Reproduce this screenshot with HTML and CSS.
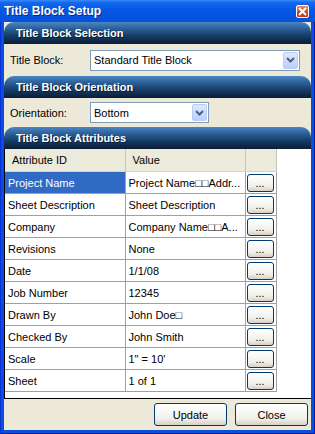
FILE: index.html
```html
<!DOCTYPE html>
<html lang="en">
<head>
    <meta charset="UTF-8">
    <title>Title Block Setup</title>
    <link rel="stylesheet" href="styles.css">
</head>
<body>
    <div class="window">
        <div class="titlebar">
            <span class="title">Title Block Setup</span>
            <span class="close-box">
                <svg width="9" height="9" viewBox="0 0 9 9"><path d="M1 1L8 8M8 1L1 8" stroke="#fff" stroke-width="2"/></svg>
            </span>
        </div>
        <div class="client">
            <div class="section-head">Title Block Selection</div>
            <div class="field-row first">
                <label>Title Block:</label>
                <div class="combo wide">
                    <span class="combo-text">Standard Title Block</span>
                    <span class="combo-btn"><svg width="9" height="6" viewBox="0 0 9 6"><path d="M1 1L4.5 4.5L8 1" fill="none" stroke="#4d6185" stroke-width="2"/></svg></span>
                </div>
            </div>
            <div class="section-head">Title Block Orientation</div>
            <div class="field-row second">
                <label>Orientation:</label>
                <div class="combo narrow">
                    <span class="combo-text">Bottom</span>
                    <span class="combo-btn"><svg width="9" height="6" viewBox="0 0 9 6"><path d="M1 1L4.5 4.5L8 1" fill="none" stroke="#4d6185" stroke-width="2"/></svg></span>
                </div>
            </div>
            <div class="section-head">Title Block Attributes</div>
            <div class="grid-wrap">
                <table class="grid">
                    <colgroup>
                        <col class="c-id">
                        <col class="c-val">
                        <col class="c-btn">
                    </colgroup>
                    <thead>
                        <tr><th>Attribute ID</th><th>Value</th><th></th></tr>
                    </thead>
                    <tbody>
                        <tr><td class="selected">Project Name</td><td>Project Name□□Addr...</td><td><button class="dots">...</button></td></tr>
                        <tr><td>Sheet Description</td><td>Sheet Description</td><td><button class="dots">...</button></td></tr>
                        <tr><td>Company</td><td>Company Name□□A...</td><td><button class="dots">...</button></td></tr>
                        <tr><td>Revisions</td><td>None</td><td><button class="dots">...</button></td></tr>
                        <tr><td>Date</td><td>1/1/08</td><td><button class="dots">...</button></td></tr>
                        <tr><td>Job Number</td><td>12345</td><td><button class="dots">...</button></td></tr>
                        <tr><td>Drawn By</td><td>John Doe□</td><td><button class="dots">...</button></td></tr>
                        <tr><td>Checked By</td><td>John Smith</td><td><button class="dots">...</button></td></tr>
                        <tr><td>Scale</td><td>1" = 10'</td><td><button class="dots">...</button></td></tr>
                        <tr><td>Sheet</td><td>1 of 1</td><td><button class="dots">...</button></td></tr>
                    </tbody>
                </table>
            </div>
            <div class="footer">
                <button class="xp-btn">Update</button>
                <button class="xp-btn">Close</button>
            </div>
        </div>
    </div>
</body>
</html>
```

FILE: styles.css
```css
body {
    margin: 0;
    font-family: "Liberation Sans", Arial, sans-serif;
    font-size: 11px;
    color: #000;
}
.window {
    width: 315px;
    height: 434px;
    box-sizing: border-box;
    background: #0a4fdc;
    border-left: 1px solid #0831d9;
    border-right: 1px solid #001ea0;
    border-bottom: 1px solid #001ea0;
    display: flex;
    flex-direction: column;
}
.titlebar {
    height: 22px;
    margin: 0 -1px;
    display: flex;
    align-items: center;
    justify-content: space-between;
    padding: 0 6px 0 4px;
    background: linear-gradient(#3a8cf8 0%, #1467ee 12%, #0558e4 45%, #0652dd 80%, #0a4fd6 100%);
}
.title {
    color: #fff;
    font-weight: bold;
    font-size: 12px;
    text-shadow: 1px 1px 0 #0a2a88;
}
.close-box {
    width: 13px;
    height: 13px;
    box-sizing: border-box;
    border: 1px solid #fff;
    border-radius: 2px;
    background: linear-gradient(#e88a6a, #d1451e 60%, #c33a18);
    display: flex;
    align-items: center;
    justify-content: center;
}
.client {
    flex: 1;
    margin: 0 3px 3px;
    background: #ece9d8;
    display: flex;
    flex-direction: column;
}
.section-head {
    height: 22px;
    line-height: 22px;
    padding-left: 12px;
    color: #fff;
    font-weight: bold;
    font-size: 11px;
    border-radius: 10px 10px 0 0;
    background: linear-gradient(#4b86c4 0%, #2c6099 30%, #153a64 65%, #0b1d34 100%);
    text-shadow: 1px 1px 0 #0a1a30;
}
.field-row {
    display: flex;
    align-items: center;
    padding-left: 6px;
}
.field-row.first {
    height: 32px;
}
.field-row.second {
    height: 29px;
}
.field-row label {
    width: 80px;
}
.combo {
    height: 21px;
    box-sizing: border-box;
    border: 1px solid #7f9db9;
    background: #fff;
    display: flex;
    align-items: center;
    justify-content: space-between;
    padding: 1px;
}
.combo.wide {
    width: 210px;
}
.combo.narrow {
    width: 119px;
}
.combo-text {
    padding-left: 2px;
}
.combo-btn {
    width: 15px;
    height: 17px;
    box-sizing: border-box;
    border: 1px solid #b9cdf7;
    border-radius: 2px;
    background: linear-gradient(#dde8fe, #bccffa);
    display: flex;
    align-items: center;
    justify-content: center;
}
.grid-wrap {
    flex: 1;
    background: #fff;
    border-left: 1px solid #000;
    border-bottom: 1px solid #000;
}
.grid {
    border-collapse: collapse;
    table-layout: fixed;
    width: 271px;
}
.c-id {
    width: 120px;
}
.c-val {
    width: 120px;
}
.c-btn {
    width: 31px;
}
.grid th {
    height: 22px;
    padding: 0 0 0 7px;
    text-align: left;
    font-weight: normal;
    background: #ebeadb;
    border-right: 1px solid #c7c5b2;
    border-bottom: 1px solid #d6d2c2;
}
.grid td {
    height: 21px;
    padding: 0 0 0 3px;
    border: 1px solid #a0a0a0;
    white-space: nowrap;
    overflow: hidden;
}
.grid td:first-child {
    border-left: none;
}
.grid td.selected {
    background: #316ac5;
    color: #fff;
}
.grid td:last-child {
    padding: 0 1px;
}
.dots {
    display: block;
    width: 27px;
    height: 18px;
    padding: 0;
    font-family: inherit;
    font-size: 11px;
    line-height: 12px;
    border: 1px solid #003c74;
    border-radius: 3px;
    background: linear-gradient(#fff, #f0f0ea 70%, #d6d0c5);
}
.footer {
    height: 31px;
    display: flex;
    justify-content: flex-end;
    align-items: center;
    gap: 8px;
    padding-right: 3px;
}
.xp-btn {
    width: 73px;
    height: 23px;
    padding: 0;
    font-family: inherit;
    font-size: 11px;
    border: 1px solid #003c74;
    border-radius: 3px;
    background: linear-gradient(#fff, #f0f0ea 70%, #d6d0c5);
}
```
